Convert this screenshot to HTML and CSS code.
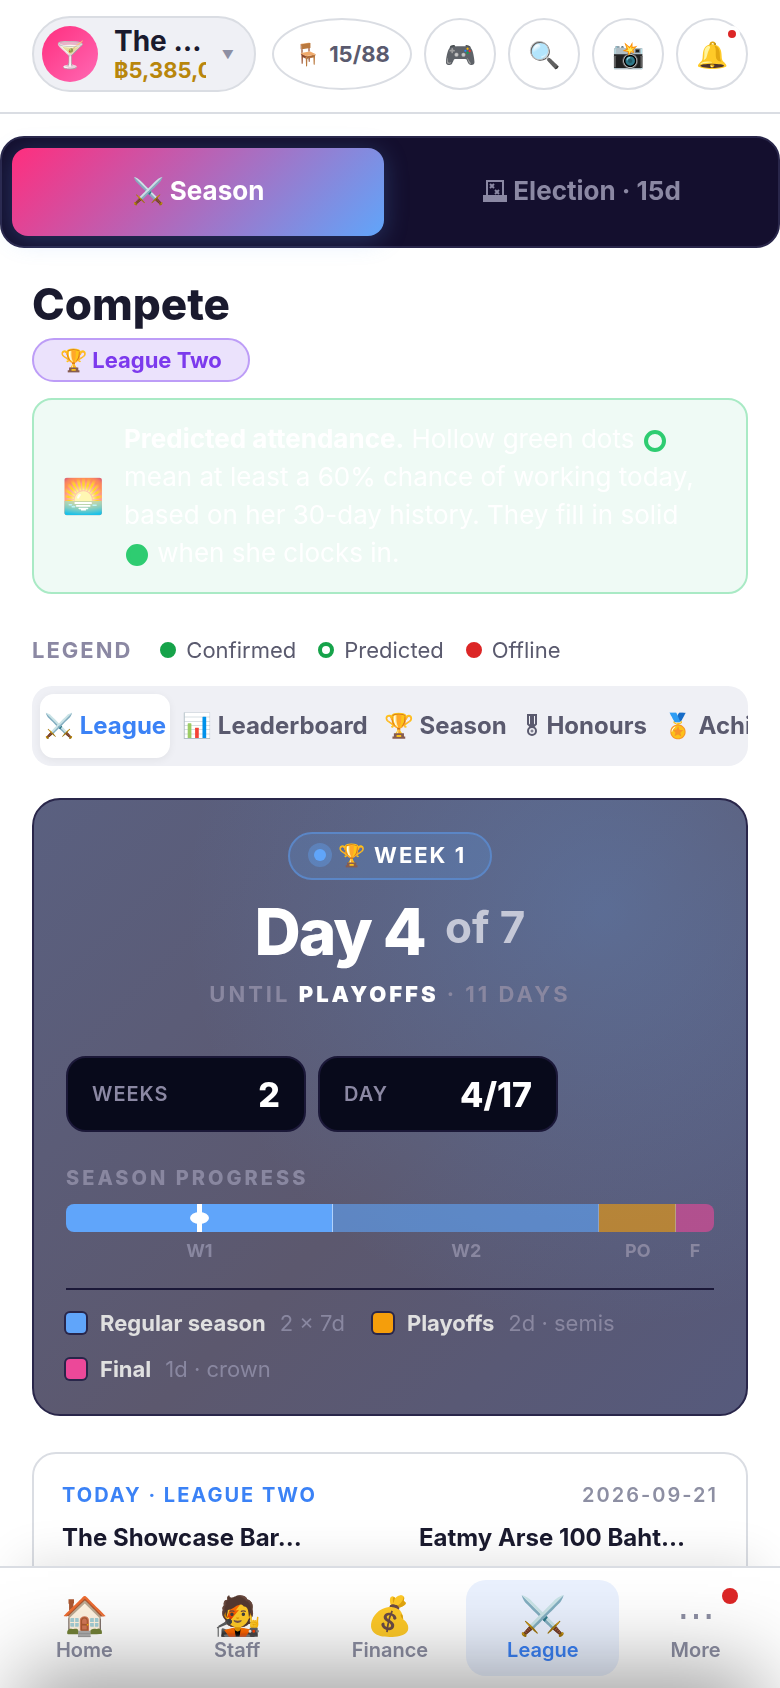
FILE: index.html
```html
<!DOCTYPE html>
<html lang="en">
<head>
  <meta charset="UTF-8" />
  <meta name="viewport" content="width=device-width, initial-scale=1.0"/>
  <title>Compete</title>
  <link rel="stylesheet" href="styles.css">
</head>
<body>
  <header class="topbar">
    <button type="button" class="bar-picker">
      <span class="avatar">🍸</span>
      <span class="bar-info">
        <span class="bar-name">The …</span>
        <span class="bar-cash">฿5,385,0</span>
      </span>
      <span class="caret">▼</span>
    </button>
    <div class="top-actions">
      <button type="button" class="round-btn seats"><span>🪑</span> 15/88</button>
      <button type="button" class="round-btn" aria-label="Games">🎮</button>
      <button type="button" class="round-btn" aria-label="Search">🔍</button>
      <button type="button" class="round-btn" aria-label="Photos">📸</button>
      <button type="button" class="round-btn" aria-label="Alerts">🔔<span class="alert-dot"></span></button>
    </div>
  </header>

  <main>
    <div class="mode-switch">
      <button type="button" class="mode active">⚔️ Season</button>
      <button type="button" class="mode">
        <svg class="ballot" width="24" height="22" viewBox="0 0 24 22" fill="none" stroke="currentColor" stroke-width="2" aria-hidden="true">
          <path d="M4 15V1h16v14"/>
          <path d="M7 4l4 4M11 4l-4 4M12 10l4 4M16 10l-4 4"/>
          <path d="M0 15h24v7H0z" fill="currentColor" stroke="none"/>
        </svg>
        Election · 15d
      </button>
    </div>

    <div class="content">
      <h1>Compete</h1>
      <span class="league-badge">🏆 League Two</span>

      <div class="notice">
        <span class="notice-icon">🌅</span>
        <p><strong>Predicted attendance.</strong> Hollow green dots <i class="dot-lg hollow"></i> mean at least a 60% chance of working today, based on her 30-day history. They fill in solid <span class="nowrap"><i class="dot-lg"></i> when</span> she clocks in.</p>
      </div>

      <div class="legend">
        <span class="legend-title">LEGEND</span>
        <span class="legend-item"><i class="dot"></i>Confirmed</span>
        <span class="legend-item"><i class="dot hollow"></i>Predicted</span>
        <span class="legend-item"><i class="dot offline"></i>Offline</span>
      </div>

      <nav class="tabs">
        <button type="button" class="tab active">⚔️ League</button>
        <button type="button" class="tab">📊 Leaderboard</button>
        <button type="button" class="tab">🏆 Season</button>
        <button type="button" class="tab">
          <svg class="medal" width="18" height="22" viewBox="0 0 18 22" fill="none" stroke="currentColor" aria-hidden="true">
            <path d="M5 1h8v9l-2 2H7l-2-2z" stroke-width="2"/>
            <path d="M9 1v10" stroke-width="4"/>
            <circle cx="9" cy="17" r="4" stroke-width="2"/>
            <circle cx="9" cy="17" r="1" stroke-width="1"/>
          </svg>
          Honours
        </button>
        <button type="button" class="tab">🏅 Achievements</button>
      </nav>

      <section class="hero">
        <div class="week-pill"><i class="pulse"></i><span>🏆 WEEK 1</span></div>
        <h2>Day 4 <small>of 7</small></h2>
        <p class="until">UNTIL <strong>PLAYOFFS</strong> · 11 DAYS</p>

        <div class="stats">
          <div class="stat"><span>WEEKS</span><b>2</b></div>
          <div class="stat"><span>DAY</span><b>4/17</b></div>
        </div>

        <h3>SEASON PROGRESS</h3>
        <div class="progress">
          <div class="seg w7 current"></div>
          <div class="seg w7"></div>
          <div class="seg w2 playoffs"></div>
          <div class="seg w1 final"></div>
          <i class="marker" style="left: 20.59%"></i>
        </div>
        <div class="progress-labels">
          <span class="w7">W1</span>
          <span class="w7">W2</span>
          <span class="w2">PO</span>
          <span class="w1">F</span>
        </div>

        <div class="phases">
          <span class="phase"><i class="swatch"></i><b>Regular season</b><span>2 × 7d</span></span>
          <span class="phase"><i class="swatch playoffs"></i><b>Playoffs</b><span>2d · semis</span></span>
          <span class="phase"><i class="swatch final"></i><b>Final</b><span>1d · crown</span></span>
        </div>
      </section>

      <section class="match">
        <div class="match-head">
          <span class="match-title">TODAY · LEAGUE TWO</span>
          <time datetime="2026-09-21">2026-09-21</time>
        </div>
        <div class="match-teams">
          <span>The Showcase Bar…</span>
          <span>Eatmy Arse 100 Baht…</span>
        </div>
      </section>
    </div>
  </main>

  <nav class="bottom-nav">
    <button type="button" class="nav-item"><span>🏠</span>Home</button>
    <button type="button" class="nav-item"><span>🧑‍🎤</span>Staff</button>
    <button type="button" class="nav-item"><span>💰</span>Finance</button>
    <button type="button" class="nav-item active"><span>⚔️</span>League</button>
    <button type="button" class="nav-item"><span>⋯</span>More<i class="nav-dot"></i></button>
  </nav>

  <div class="sheet"></div>
</body>
</html>
```

FILE: styles.css
```css
* {
  box-sizing: border-box;
}

body {
  margin: 0;
  height: 100vh;
  display: flex;
  flex-direction: column;
  overflow: hidden;
  background: #fff;
  color: #1a1a2e;
  font-family: Inter, sans-serif;
  font-size: 22px;
}

button {
  font-family: inherit;
  color: inherit;
  border: none;
  background: none;
  padding: 0;
  cursor: pointer;
}

h1, h2, h3, p {
  margin: 0;
}

.nowrap {
  white-space: nowrap;
}

/* top bar */
.topbar {
  display: flex;
  align-items: center;
  justify-content: space-between;
  gap: 16px;
  padding: 16px 32px 20px;
  border-bottom: 2px solid #dadde3;
}

.bar-picker {
  display: flex;
  align-items: center;
  width: 224px;
  height: 76px;
  padding: 0 20px 0 8px;
  background: #eff0f5;
  border: 2px solid #dadde3;
  border-radius: 38px;
  text-align: left;
}

.avatar {
  display: flex;
  align-items: center;
  justify-content: center;
  flex: none;
  width: 56px;
  height: 56px;
  margin-right: 16px;
  border-radius: 50%;
  background: linear-gradient(135deg, #ff2e7e, #ff69b4);
  font-size: 26px;
}

.bar-info {
  flex: 1;
  min-width: 0;
  margin-right: 16px;
}

.bar-name,
.bar-cash {
  display: block;
  overflow: hidden;
  white-space: nowrap;
}

.bar-name {
  font-size: 28px;
  line-height: 32px;
  font-weight: 700;
}

.bar-cash {
  font-size: 22px;
  line-height: 26px;
  font-weight: 700;
  color: #b8860b;
}

.caret {
  font-size: 12px;
  color: #8d8fa3;
}

.top-actions {
  display: flex;
  gap: 12px;
}

.round-btn {
  position: relative;
  width: 72px;
  height: 72px;
  border: 2px solid #dadde3;
  border-radius: 50%;
  background: #fff;
  font-size: 26px;
}

.seats {
  display: flex;
  align-items: center;
  justify-content: center;
  gap: 8px;
  width: 140px;
  font-size: 22px;
  font-weight: 700;
  color: #5a5a6e;
}

.alert-dot {
  position: absolute;
  top: 6px;
  right: 6px;
  width: 16px;
  height: 16px;
  border: 4px solid #fff;
  border-radius: 50%;
  background: #dc2626;
}

main {
  flex: 1;
  min-height: 0;
  padding-top: 22px;
  overflow-y: auto;
  scrollbar-width: none;
}

.mode-switch {
  display: grid;
  grid-template-columns: 1fr 1fr;
  gap: 12px;
  padding: 10px;
  border: 2px solid #29264a;
  border-radius: 24px;
  background: #140f2e;
}

.mode {
  height: 88px;
  padding-bottom: 4px;
  border-radius: 16px;
  font-size: 26px;
  font-weight: 700;
  color: #8b88a3;
}

.mode.active {
  color: #fff;
  background: linear-gradient(135deg, #ff2e7e, #60a5fa);
  box-shadow: 0 4px 24px rgba(96, 165, 250, 0.25);
}

.ballot,
.medal {
  vertical-align: -2px;
}

.content {
  padding: 30px 32px;
}

h1 {
  font-size: 44px;
  line-height: 52px;
  font-weight: 800;
  margin-bottom: 8px;
}

.league-badge {
  display: flex;
  align-items: center;
  width: fit-content;
  height: 44px;
  padding: 0 26px;
  border: 2px solid #bd9df7;
  border-radius: 22px;
  background: #ebe2fc;
  color: #7c3aed;
  font-weight: 700;
}

/* predicted attendance */
.notice {
  display: flex;
  align-items: center;
  gap: 20px;
  margin-top: 16px;
  padding: 20px 28px;
  border: 2px solid #a9eac5;
  border-radius: 20px;
  background: #effaf5;
  color: #fff;
  font-size: 26px;
  line-height: 38px;
}

.notice-icon {
  font-size: 34px;
}

.dot-lg {
  display: inline-block;
  width: 22px;
  height: 22px;
  margin: 0 2px;
  border: 4px solid #2ecc71;
  border-radius: 50%;
  background: #2ecc71;
  vertical-align: -4px;
}

.dot-lg.hollow,
.dot.hollow {
  background: none;
}

.legend {
  display: flex;
  align-items: center;
  gap: 22px;
  margin: 42px 0 22px;
  line-height: 28px;
  color: #5a5a6e;
}

.legend-title {
  margin-right: 6px;
  font-weight: 700;
  letter-spacing: 2px;
  color: #8b88a3;
}

.legend-item {
  display: flex;
  align-items: center;
  gap: 10px;
}

.dot {
  width: 16px;
  height: 16px;
  border: 4px solid #16a34a;
  border-radius: 50%;
  background: #16a34a;
}

.dot.offline {
  border-color: #dc2626;
  background: #dc2626;
}

.tabs {
  display: flex;
  gap: 8px;
  padding: 8px;
  border-radius: 20px;
  background: #eff0f5;
  overflow-x: auto;
  scrollbar-width: none;
}

.tab {
  flex: none;
  height: 64px;
  padding: 0 4px 2px;
  border-radius: 14px;
  font-size: 24px;
  font-weight: 700;
  color: #5a5a6e;
}

.tab.active {
  background: #fff;
  color: #3b82f6;
  box-shadow: 0 2px 8px rgba(0, 0, 0, 0.06);
}

/* season card */
.hero {
  margin-top: 32px;
  padding: 32px;
  border: 2px solid #29264a;
  border-radius: 28px;
  background:
    radial-gradient(circle at 80% 18%, rgba(92, 145, 215, 0.36), transparent 55%),
    linear-gradient(135deg, #5a6080 0%, #5c586e 55%, #565a7c 100%);
  color: #fff;
}

.week-pill {
  display: flex;
  align-items: center;
  gap: 12px;
  width: fit-content;
  height: 48px;
  margin: 0 auto;
  padding: 0 24px 2px;
  border: 2px solid #5b86c6;
  border-radius: 24px;
  background: rgba(96, 165, 250, 0.18);
  line-height: 24px;
  font-weight: 700;
  letter-spacing: 2px;
}

.pulse {
  width: 12px;
  height: 12px;
  border-radius: 50%;
  background: #60a5fa;
  box-shadow: 0 0 0 6px rgba(96, 165, 250, 0.35);
}

h2 {
  margin-top: 20px;
  font-size: 64px;
  line-height: 64px;
  font-weight: 800;
  letter-spacing: -2px;
  text-align: center;
}

h2 small {
  margin-left: 8px;
  font-size: 44px;
  line-height: 44px;
  font-weight: 700;
  letter-spacing: 0;
  vertical-align: 12px;
  color: #c5c8d7;
}

.until {
  margin-top: 16px;
  font-size: 22px;
  line-height: 28px;
  font-weight: 700;
  letter-spacing: 3px;
  text-align: center;
  color: #8987a0;
}

.until strong {
  color: #fff;
}

.stats {
  display: flex;
  gap: 12px;
  margin-top: 48px;
}

.stat {
  display: flex;
  align-items: center;
  justify-content: space-between;
  width: 240px;
  height: 76px;
  padding: 0 24px;
  border: 2px solid #1b1838;
  border-radius: 20px;
  background: #080a1b;
}

.stat span {
  font-size: 20px;
  font-weight: 600;
  letter-spacing: 1px;
  color: #8b88a3;
}

.stat b {
  font-size: 34px;
  font-weight: 800;
}

h3 {
  margin: 34px 0 14px;
  font-size: 20px;
  line-height: 24px;
  font-weight: 800;
  letter-spacing: 3px;
  color: #8987a0;
}

.progress {
  position: relative;
  display: flex;
  height: 28px;
  border-radius: 8px;
  overflow: hidden;
}

.w7 { flex: 7; }
.w2 { flex: 2; }
.w1 { flex: 1; }

.seg {
  background: #60a5fa;
  border-right: 1px solid rgba(255, 255, 255, 0.5);
  opacity: 0.6;
}

.seg.current {
  opacity: 1;
}

.seg.playoffs,
.swatch.playoffs {
  background: #f59e0b;
}

.seg.final,
.swatch.final {
  background: #ec4899;
}

.seg.final {
  border-right: none;
}

.marker {
  position: absolute;
  top: 0;
  bottom: 0;
  width: 5px;
  margin-left: -2px;
  background: #fff;
}

.marker::after {
  content: "";
  position: absolute;
  top: 8px;
  left: -7px;
  width: 19px;
  height: 12px;
  border-radius: 50%;
  background: #fff;
}

.progress-labels {
  display: flex;
  margin: 8px 0 26px;
  font-size: 18px;
  line-height: 22px;
  font-weight: 700;
  text-align: center;
  color: #8987a0;
}

.phases {
  display: flex;
  flex-wrap: wrap;
  gap: 20px 28px;
  padding-top: 20px;
  border-top: 2px solid #1b1838;
  line-height: 26px;
  color: #8987a0;
}

.phase {
  display: flex;
  align-items: center;
  gap: 14px;
}

.phase b {
  font-weight: 700;
  color: #e0e0e0;
}

.swatch {
  width: 20px;
  height: 20px;
  border-radius: 4px;
  background: #60a5fa;
  box-shadow: 0 0 0 2px #29264a;
}

.match {
  min-height: 300px;
  margin-top: 36px;
  padding: 28px;
  border: 2px solid #dadde3;
  border-radius: 24px;
}

.match-head {
  display: flex;
  justify-content: space-between;
  font-size: 20px;
  line-height: 26px;
  font-weight: 600;
}

.match-title {
  font-weight: 700;
  letter-spacing: 2px;
  color: #3b82f6;
}

.match-head time {
  letter-spacing: 2px;
  color: #8d8fa3;
}

.match-teams {
  display: grid;
  grid-template-columns: 1fr 1fr;
  gap: 58px;
  margin-top: 14px;
  font-size: 24px;
  line-height: 32px;
  font-weight: 700;
  white-space: nowrap;
}

.bottom-nav {
  position: relative;
  display: flex;
  padding: 12px 8px;
  border-top: 2px solid #dadde3;
  background: #fff;
  box-shadow: 0 -24px 48px -20px rgba(0, 0, 0, 0.12);
}

.nav-item {
  position: relative;
  display: flex;
  flex: 1;
  flex-direction: column;
  align-items: center;
  justify-content: center;
  height: 96px;
  border-radius: 20px;
  font-size: 20px;
  line-height: 26px;
  font-weight: 600;
  color: #8d8fa3;
}

.nav-item span {
  font-size: 38px;
  line-height: 44px;
  font-weight: 400;
}

.nav-item.active {
  background: #eaf1fe;
  color: #3b82f6;
}

.nav-dot {
  position: absolute;
  top: 8px;
  right: 34px;
  width: 16px;
  height: 16px;
  border-radius: 50%;
  background: #dc2626;
}

.sheet {
  position: fixed;
  top: 100%;
  left: 20px;
  right: 20px;
  height: 400px;
  box-shadow: 0 -20px 80px rgba(0, 0, 0, 0.37);
  pointer-events: none;
}
```
